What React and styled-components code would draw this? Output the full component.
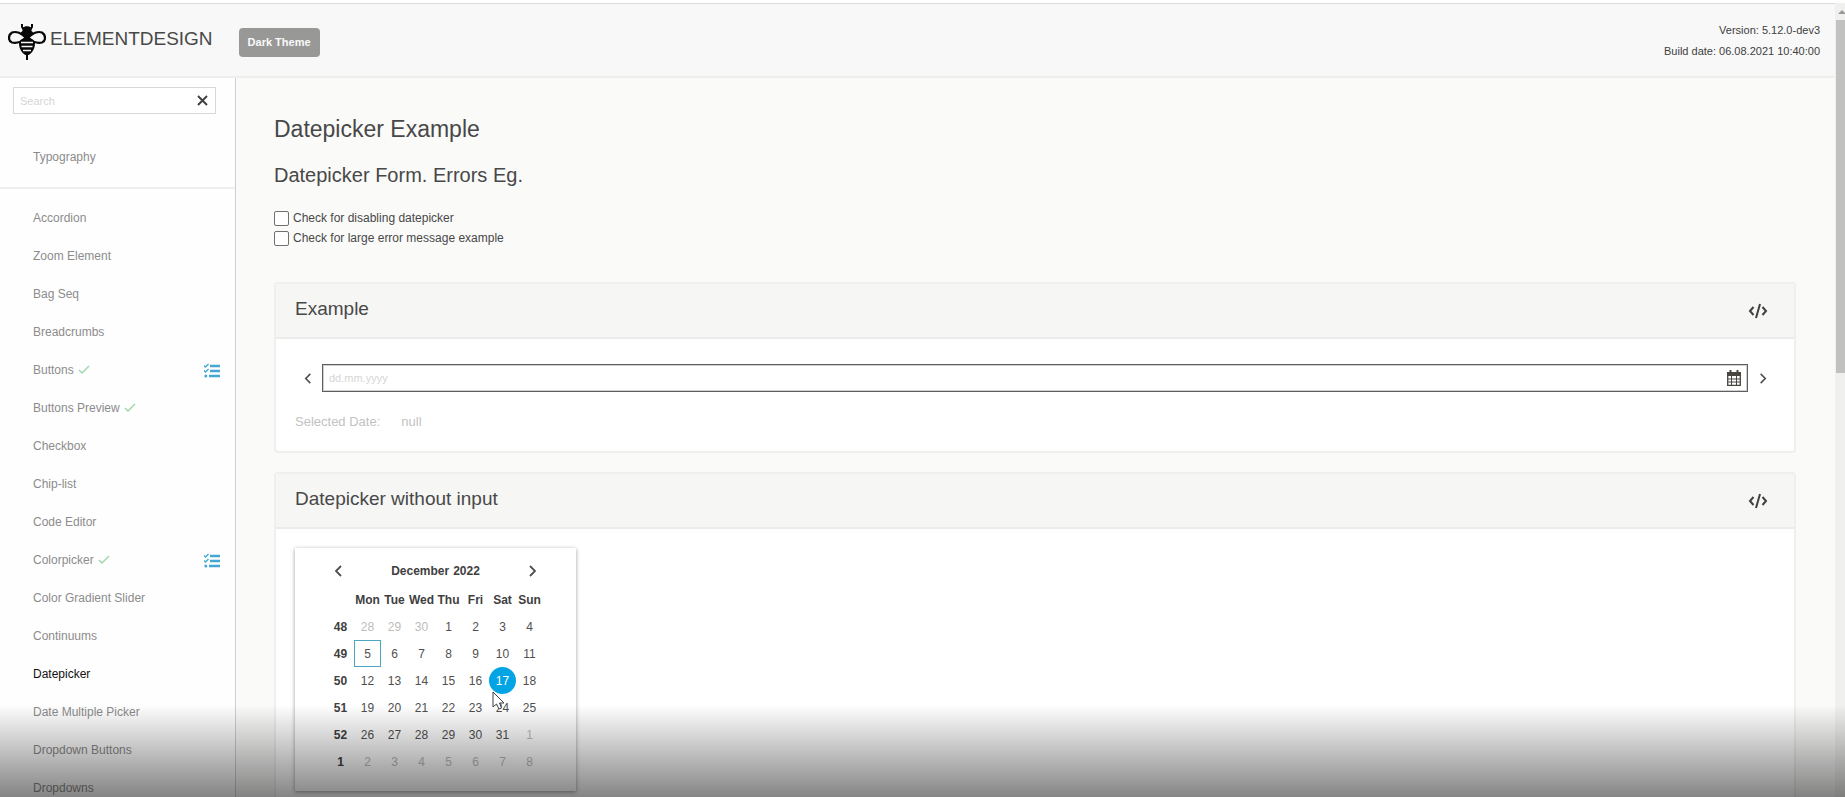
import React from "react";
import styled, { createGlobalStyle } from "styled-components";

const GlobalStyle = createGlobalStyle`
  *, *::before, *::after { box-sizing: border-box; }
  body {
    margin: 0;
    overflow: hidden;
    background: #fff;
    color: #484848;
    font-family: "Liberation Sans", Arial, sans-serif;
    font-size: 12px;
  }
  button { font-family: inherit; }
  h1, h2, h3, p { margin: 0; font-weight: 400; }
`;

const Shell = styled.div`
  display: flex;
  height: 100vh;
  padding-top: 3px;
  overflow: hidden;
`;

const Page = styled.div`
  flex: 1;
  min-width: 0;
  display: flex;
  flex-direction: column;
  border-top: 1px solid #dcdcdc;
`;

const Header = styled.header`
  flex: none;
  display: flex;
  align-items: center;
  height: 74px;
  padding: 0 15px 0 8px;
  background: #f8f8f8;
  border-bottom: 2px solid #eeeeed;
`;

const Brand = styled.a`
  display: flex;
  align-items: center;
  gap: 4px;
  color: #484848;
  font-size: 19px;
  line-height: 24px;
  text-decoration: none;
  padding-bottom: 3px;

  svg { margin-top: 5px; }
`;

const ThemeButton = styled.button`
  height: 29px;
  margin: 4px 0 0 26px;
  padding: 0 9px;
  border: 0;
  border-radius: 4px;
  background: #989897;
  color: #fafafa;
  font-size: 11px;
  font-weight: 700;
`;

const BuildInfo = styled.div`
  margin-left: auto;
  padding-top: 2px;
  color: #404040;
  font-size: 11px;
  line-height: 21px;
  text-align: right;
`;

const Body = styled.div`
  flex: 1;
  min-height: 0;
  display: flex;
`;

const Sidebar = styled.nav`
  flex: none;
  width: 236px;
  overflow: hidden;
  border-right: 1px solid #cfcfcf;
  background: #fefefe;
`;

const SearchBox = styled.div`
  display: flex;
  align-items: center;
  height: 27px;
  margin: 9px 19px 0 13px;
  border: 1px solid #d8d8d8;
  background: #fff;
`;

const TextInput = styled.input`
  flex: 1;
  min-width: 0;
  height: 100%;
  padding: 0 6px;
  border: 0;
  outline: 0;
  background: transparent;
  color: #484848;
  font-family: inherit;
  font-size: ${(p) => p.$size}px;

  &::placeholder { color: #d6d6d6; opacity: 1; }
`;

const IconButton = styled.button`
  flex: none;
  display: flex;
  align-items: center;
  justify-content: center;
  width: ${(p) => p.$width}px;
  height: 25px;
  padding: 0;
  border: 0;
  background: transparent;
  color: #404040;
`;

const NavGroup = styled.ul`
  margin: 0;
  padding: ${(p) => (p.$first ? "24px 0 11px" : "10px 0")};
  list-style: none;
  border-bottom: ${(p) => (p.$first ? "2px solid #efefef" : "0")};
`;

const NavItem = styled.li`
  display: flex;
  align-items: center;
  justify-content: space-between;
  height: 38px;
  padding: 0 15px 0 33px;
`;

const NavLink = styled.a`
  display: flex;
  align-items: center;
  gap: 4px;
  color: ${(p) => (p.$active ? "#111" : "#8c8c8c")};
  font-size: 12px;
  text-decoration: none;
`;

const Content = styled.main`
  flex: 1;
  min-width: 0;
  overflow: hidden;
  padding: 36px 39px 0 38px;
  background: #fafaf9;
`;

const Title = styled.h1`
  font-size: 23px;
  line-height: 30px;
`;

const Subtitle = styled.h2`
  margin-top: 19px;
  font-size: 20px;
  line-height: 24px;
`;

const Options = styled.div`
  display: flex;
  flex-direction: column;
  gap: 4px;
  margin: 23px 0 36px;
`;

const Option = styled.label`
  display: flex;
  align-items: center;
  gap: 4px;
  height: 16px;
  font-size: 12px;
`;

const Checkbox = styled.input`
  appearance: none;
  width: 15px;
  height: 15px;
  margin: 0;
  border: 1px solid #707070;
  border-radius: 2px;
  background: #fff;
`;

const Card = styled.section`
  margin-bottom: 19px;
  border: 2px solid #efefee;
  border-radius: 4px;
  background: #fff;
`;

const CardHeader = styled.div`
  display: flex;
  align-items: center;
  justify-content: space-between;
  height: 55px;
  padding: 0 24px 0 19px;
  border-bottom: 2px solid #ebebea;
  background: #f6f6f5;
`;

const CardTitle = styled.h3`
  padding-bottom: 3px;
  font-size: 19px;
  line-height: 24px;
`;

const CardBody = styled.div`
  padding: ${(p) => (p.$form ? "25px 18px 19px 19px" : "19px")};
`;

const DateRow = styled.div`
  display: flex;
  align-items: center;
`;

const DateField = styled.div`
  flex: 1;
  display: flex;
  align-items: center;
  height: 28px;
  border: 1px solid #5e5e5e;
  outline: 1px solid #d0d0d0;
  outline-offset: -2px;
`;

const Selected = styled.p`
  display: flex;
  gap: 21px;
  margin-top: 20px;
  color: #c2c2c2;
  font-size: 13px;
  line-height: 20px;
`;

const Calendar = styled.div`
  width: 281px;
  padding: 8px 32px 16px;
  background: #fff;
  box-shadow: 0 1px 4px rgba(0, 0, 0, 0.4);
`;

const MonthBar = styled.div`
  display: flex;
  align-items: center;
  justify-content: space-between;
  height: 30px;
  padding: 0 2px;
  color: #404040;
  font-size: 12px;
  font-weight: 700;
`;

const MonthLabel = styled.span`
  display: flex;
  gap: 4px;
`;

const MonthTable = styled.table`
  width: 216px;
  table-layout: fixed;
  border-collapse: collapse;
  font-size: 12px;

  th, td { height: 27px; padding: 0; text-align: center; white-space: nowrap; }
  th { color: #404040; }
`;

const Day = styled.button`
  display: block;
  width: 27px;
  height: 27px;
  padding: 0;
  border: ${(p) => (p.$today ? "1px solid #4ba6c6" : "0")};
  border-radius: ${(p) => (p.$picked ? "50%" : "0")};
  background: ${(p) => (p.$picked ? "#02a4e4" : "transparent")};
  color: ${(p) => (p.$picked ? "#fff" : p.$muted ? "#bcbcbc" : "#505050")};
  font-size: 12px;
`;

const PickedCell = styled.td`
  position: relative;
`;

const Pointer = styled.svg`
  position: absolute;
  left: 3px;
  top: 24px;
  z-index: 1;
`;

const Scrollbar = styled.div`
  flex: none;
  display: flex;
  flex-direction: column;
  align-items: flex-end;
  width: 10px;
  overflow: hidden;
  background: #f0f0ef;
`;

const ScrollArrow = styled.svg`
  flex: none;
  margin: 6px 0 5px;
`;

const ScrollThumb = styled.div`
  width: 9px;
  height: calc(45% - 4px);
  background: #c1c1c0;
`;

const Shade = styled.div`
  position: fixed;
  inset: auto 0 0;
  height: 92px;
  background: linear-gradient(rgba(0, 0, 0, 0), rgba(0, 0, 0, 0.48));
  pointer-events: none;
`;

const Bee = () => (
  <svg width="38" height="37" viewBox="0 0 38 37" fill="none" stroke="#080808" aria-hidden="true">
    <path d="M18 15C14 10 8 8 4 9.500 0 12 0 18 4 19.500c5 1 10-1 14-4.500ZM20 15c4-5 10-7 14-5.500 4 2.500 4 8.500 0 10-5 1-10-1-14-4.500Z" fill="#f8f8f8" strokeWidth="2.200" />
    <path d="M14 1v3l2 3M24 1v3l-2 3" strokeWidth="2" />
    <path d="M14.500 5c2-2.500 7-2.500 9 0v3c1.500 1 2 2 2 3.500L19 16l-6.500-4.500c0-1.500.5-2.500 2-3.500Z" fill="#080808" stroke="none" />
    <path d="M12.500 17 19 13l6.500 4 1.500 3c0 6-3 10-6.500 12h-3C14 30 11 26 11 20Z" fill="#080808" stroke="none" />
    <path d="M19 31v6" strokeWidth="2" />
    <path d="M13 19.500h12M13.500 23.500h11M15 27.500h8" stroke="#f8f8f8" strokeWidth="1.600" />
  </svg>
);

const Chevron = ({ right, size = 12 }) => (
  <svg width={size} height={size} viewBox="0 0 12 12" fill="none" stroke="#505050" strokeWidth="1.800" aria-hidden="true">
    <path d={right ? "M4 1l5 5-5 5" : "M8 1L3 6l5 5"} />
  </svg>
);

const Cross = () => (
  <svg width="11" height="11" viewBox="0 0 11 11" stroke="#404040" strokeWidth="1.900" aria-hidden="true">
    <path d="M1 1l9 9M10 1L1 10" />
  </svg>
);

const Check = () => (
  <svg width="12" height="10" viewBox="0 0 12 10" fill="none" stroke="#9ad6a8" strokeWidth="1.3" aria-hidden="true">
    <path d="M1 5l3 3 7-7" />
  </svg>
);

const Tasks = () => (
  <svg width="16" height="18" viewBox="0 0 16 18" fill="none" stroke="#43a9d3" aria-hidden="true">
    <path d="M6 5h10M6 10h10M5 15h11" strokeWidth="2.400" />
    <path d="M0 4.500l1.500 1.500L4.500 3M0 9.500l1.500 1.500L4.500 8" strokeWidth="1.400" />
    <circle cx="1.800" cy="15" r="1.500" fill="#43a9d3" stroke="none" />
  </svg>
);

const Code = () => (
  <svg width="20" height="16" viewBox="0 0 20 16" fill="none" stroke="#404040" strokeWidth="2" aria-hidden="true">
    <path d="M5.500 4L2 8l3.500 4M14.500 4L18 8l-3.500 4M12 1L8 15" />
  </svg>
);

const CalendarIcon = () => (
  <svg width="14" height="16" viewBox="0 0 14 16" fill="none" stroke="#484440" aria-hidden="true">
    <path d="M.7 3h12.600v12.300H.7z" strokeWidth="1.300" />
    <path d="M0 2h14v4H0z" fill="#484440" stroke="none" />
    <path d="M3.500 0v3M10.500 0v3" strokeWidth="2" />
    <path d="M4.500 6v9M9.500 6v9M1 9h12M1 12h12" />
  </svg>
);

const NAV = [
  { label: "Accordion" },
  { label: "Zoom Element" },
  { label: "Bag Seq" },
  { label: "Breadcrumbs" },
  { label: "Buttons", check: true, tasks: true },
  { label: "Buttons Preview", check: true },
  { label: "Checkbox" },
  { label: "Chip-list" },
  { label: "Code Editor" },
  { label: "Colorpicker", check: true, tasks: true },
  { label: "Color Gradient Slider" },
  { label: "Continuums" },
  { label: "Datepicker", active: true },
  { label: "Date Multiple Picker" },
  { label: "Dropdown Buttons" },
  { label: "Dropdowns" },
];

const WEEKDAYS = ["Mon", "Tue", "Wed", "Thu", "Fri", "Sat", "Sun"];
const WEEKS = [48, 49, 50, 51, 52, 1];
const FIRST_MONDAY = new Date(2022, 10, 28);

const dayAt = (index) => {
  const date = new Date(FIRST_MONDAY);
  date.setDate(date.getDate() + index);
  const inMonth = date.getMonth() === 11;
  const day = date.getDate();
  return { day, inMonth, today: inMonth && day === 5, picked: inMonth && day === 17 };
};

function NavEntry({ item }) {
  return (
    <NavItem>
      <NavLink href="#" $active={item.active}>
        <span>{item.label}</span>
        {item.check && <Check />}
      </NavLink>
      {item.tasks && <Tasks />}
    </NavItem>
  );
}

function DayCell({ index }) {
  const { day, inMonth, today, picked } = dayAt(index);
  const button = (
    <Day type="button" $muted={!inMonth} $today={today} $picked={picked}>
      {day}
    </Day>
  );
  if (!picked) return <td>{button}</td>;
  return (
    <PickedCell>
      {button}
      <Pointer width="13" height="20" viewBox="0 0 13 20" aria-hidden="true">
        <path d="M1 1v15l3.500-3 2.500 5 2.500-1-2-5H12Z" fill="#fff" stroke="#3c3c48" />
      </Pointer>
    </PickedCell>
  );
}

function MonthCalendar() {
  return (
    <Calendar>
      <MonthBar>
        <IconButton type="button" aria-label="Previous month" $width={20}><Chevron /></IconButton>
        <MonthLabel><span>December</span><span>2022</span></MonthLabel>
        <IconButton type="button" aria-label="Next month" $width={20}><Chevron right /></IconButton>
      </MonthBar>
      <MonthTable>
        <thead>
          <tr>
            <td />
            {WEEKDAYS.map((name) => <th key={name} scope="col">{name}</th>)}
          </tr>
        </thead>
        <tbody>
          {WEEKS.map((week, row) => (
            <tr key={week}>
              <th scope="row">{week}</th>
              {WEEKDAYS.map((name, col) => <DayCell key={name} index={row * 7 + col} />)}
            </tr>
          ))}
        </tbody>
      </MonthTable>
    </Calendar>
  );
}

function ExampleCard({ title, form, children }) {
  return (
    <Card>
      <CardHeader>
        <CardTitle>{title}</CardTitle>
        <IconButton type="button" aria-label="Show code" $width={24}><Code /></IconButton>
      </CardHeader>
      <CardBody $form={form}>{children}</CardBody>
    </Card>
  );
}

export default function App() {
  return (
    <>
      <GlobalStyle />
      <Shell>
        <Page>
          <Header>
            <Brand href="#"><Bee />ELEMENTDESIGN</Brand>
            <ThemeButton type="button">Dark Theme</ThemeButton>
            <BuildInfo>
              <div>Version: 5.12.0-dev3</div>
              <div>Build date: 06.08.2021 10:40:00</div>
            </BuildInfo>
          </Header>
          <Body>
            <Sidebar>
              <SearchBox>
                <TextInput type="text" placeholder="Search" aria-label="Search" $size={11} />
                <IconButton type="button" aria-label="Clear search" $width={26}><Cross /></IconButton>
              </SearchBox>
              <NavGroup $first>
                <NavEntry item={{ label: "Typography" }} />
              </NavGroup>
              <NavGroup>
                {NAV.map((item) => <NavEntry key={item.label} item={item} />)}
              </NavGroup>
            </Sidebar>
            <Content>
              <Title>Datepicker Example</Title>
              <Subtitle>Datepicker Form. Errors Eg.</Subtitle>
              <Options>
                <Option><Checkbox type="checkbox" />Check for disabling datepicker</Option>
                <Option><Checkbox type="checkbox" />Check for large error message example</Option>
              </Options>
              <ExampleCard title="Example" form>
                <DateRow>
                  <IconButton type="button" aria-label="Previous day" $width={27}><Chevron size={11} /></IconButton>
                  <DateField>
                    <TextInput type="text" placeholder="dd.mm.yyyy" aria-label="Date" $size={11} />
                    <IconButton type="button" aria-label="Open calendar" $width={27}><CalendarIcon /></IconButton>
                  </DateField>
                  <IconButton type="button" aria-label="Next day" $width={28}><Chevron right size={11} /></IconButton>
                </DateRow>
                <Selected><span>Selected Date:</span><span>null</span></Selected>
              </ExampleCard>
              <ExampleCard title="Datepicker without input">
                <MonthCalendar />
              </ExampleCard>
            </Content>
          </Body>
        </Page>
        <Scrollbar aria-hidden="true">
          <ScrollArrow width="9" height="6" viewBox="0 0 9 6">
            <path d="M2 5l4-4 4 4Z" fill="#9a9a9a" />
          </ScrollArrow>
          <ScrollThumb />
        </Scrollbar>
      </Shell>
      <Shade />
    </>
  );
}
